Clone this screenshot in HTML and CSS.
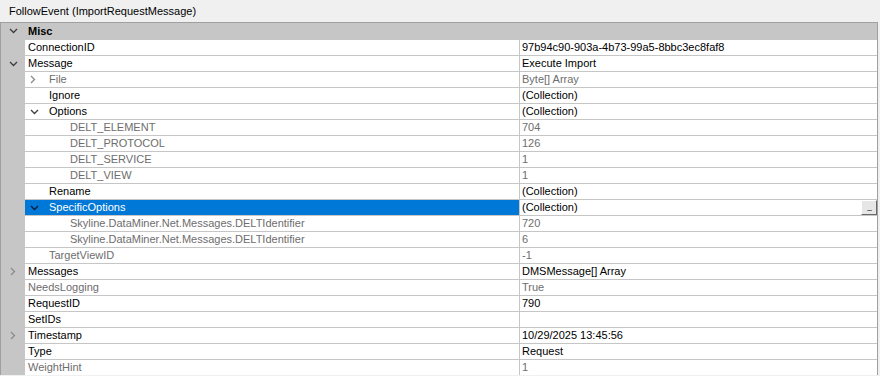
FILE: index.html
```html
<!DOCTYPE html>
<html lang="en">
<head>
    <meta charset="UTF-8">
    <title>FollowEvent</title>
    <link rel="stylesheet" href="styles.css">
</head>
<body>
    <!-- 标题 -->
    <div class="title">FollowEvent (ImportRequestMessage)</div>

    <div class="grid">
        <div class="row cat">
            <div class="gut"><svg class="chev open" width="9" height="6" viewBox="0 0 9 6"><path d="M1 1 L4.5 4.5 L8 1"/></svg></div>
            <div class="name">Misc</div>
        </div>
        <div class="row">
            <div class="gut"></div>
            <div class="name">ConnectionID</div>
            <div class="val">97b94c90-903a-4b73-99a5-8bbc3ec8faf8</div>
        </div>
        <div class="row">
            <div class="gut"><svg class="chev open" width="9" height="6" viewBox="0 0 9 6"><path d="M1 1 L4.5 4.5 L8 1"/></svg></div>
            <div class="name">Message</div>
            <div class="val">Execute Import</div>
        </div>
        <div class="row ro">
            <div class="gut"></div>
            <div class="name lv1"><span class="tw"><svg class="chev" width="6" height="9" viewBox="0 0 6 9"><path d="M1 1 L4.5 4.5 L1 8"/></svg></span>File</div>
            <div class="val">Byte[] Array</div>
        </div>
        <div class="row">
            <div class="gut"></div>
            <div class="name lv1"><span class="tw"></span>Ignore</div>
            <div class="val">(Collection)</div>
        </div>
        <div class="row">
            <div class="gut"></div>
            <div class="name lv1"><span class="tw"><svg class="chev open" width="9" height="6" viewBox="0 0 9 6"><path d="M1 1 L4.5 4.5 L8 1"/></svg></span>Options</div>
            <div class="val">(Collection)</div>
        </div>
        <div class="row ro">
            <div class="gut"></div>
            <div class="name lv2">DELT_ELEMENT</div>
            <div class="val">704</div>
        </div>
        <div class="row ro">
            <div class="gut"></div>
            <div class="name lv2">DELT_PROTOCOL</div>
            <div class="val">126</div>
        </div>
        <div class="row ro">
            <div class="gut"></div>
            <div class="name lv2">DELT_SERVICE</div>
            <div class="val">1</div>
        </div>
        <div class="row ro">
            <div class="gut"></div>
            <div class="name lv2">DELT_VIEW</div>
            <div class="val">1</div>
        </div>
        <div class="row">
            <div class="gut"></div>
            <div class="name lv1"><span class="tw"></span>Rename</div>
            <div class="val">(Collection)</div>
        </div>
        <div class="row sel">
            <div class="gut"></div>
            <div class="name lv1"><span class="tw"><svg class="chev open" width="9" height="6" viewBox="0 0 9 6"><path d="M1 1 L4.5 4.5 L8 1"/></svg></span>SpecificOptions</div>
            <div class="val">(Collection)<span class="dots">...</span></div>
        </div>
        <div class="row ro">
            <div class="gut"></div>
            <div class="name lv2">Skyline.DataMiner.Net.Messages.DELTIdentifier</div>
            <div class="val">720</div>
        </div>
        <div class="row ro">
            <div class="gut"></div>
            <div class="name lv2">Skyline.DataMiner.Net.Messages.DELTIdentifier</div>
            <div class="val">6</div>
        </div>
        <div class="row ro">
            <div class="gut"></div>
            <div class="name lv1"><span class="tw"></span>TargetViewID</div>
            <div class="val">-1</div>
        </div>
        <div class="row">
            <div class="gut"><svg class="chev" width="6" height="9" viewBox="0 0 6 9"><path d="M1 1 L4.5 4.5 L1 8"/></svg></div>
            <div class="name">Messages</div>
            <div class="val">DMSMessage[] Array</div>
        </div>
        <div class="row ro">
            <div class="gut"></div>
            <div class="name">NeedsLogging</div>
            <div class="val">True</div>
        </div>
        <div class="row">
            <div class="gut"></div>
            <div class="name">RequestID</div>
            <div class="val">790</div>
        </div>
        <div class="row">
            <div class="gut"></div>
            <div class="name">SetIDs</div>
            <div class="val"></div>
        </div>
        <div class="row">
            <div class="gut"><svg class="chev" width="6" height="9" viewBox="0 0 6 9"><path d="M1 1 L4.5 4.5 L1 8"/></svg></div>
            <div class="name">Timestamp</div>
            <div class="val">10/29/2025 13:45:56</div>
        </div>
        <div class="row">
            <div class="gut"></div>
            <div class="name">Type</div>
            <div class="val">Request</div>
        </div>
        <div class="row ro">
            <div class="gut"></div>
            <div class="name">WeightHint</div>
            <div class="val">1</div>
        </div>
    </div>
</body>
</html>
```

FILE: styles.css
```css
*{
    margin: 0;
    padding: 0;
    box-sizing: border-box;
}

body{
    background-color: #f0f0f0;
    font-family: "Liberation Sans", Arial, sans-serif;
    font-size: 11px;
    color: #000;
}

.title{
    height: 22px;
    line-height: 22px;
    padding-left: 9px;
}

/* 表格外框 */
.grid{
    width: 878px;
    border: 1px solid #a0a0a0;
    border-bottom: none;
    background-color: #c6c6c6;
}

.row{
    display: flex;
    height: 16px;
    border-top: 1px solid #c6c6c6;
    line-height: 15px;
}

.row:first-child{
    border-top: none;
}

.gut{
    width: 24px;
    flex: none;
    display: flex;
    align-items: center;
    justify-content: center;
}

.name{
    width: 494px;
    flex: none;
    padding-left: 3px;
    background-color: #fff;
    white-space: nowrap;
    overflow: hidden;
    display: flex;
    align-items: center;
}

.name.lv1{
    padding-left: 0;
}

.name.lv2{
    padding-left: 45px;
}

.tw{
    width: 24px;
    flex: none;
    display: flex;
    align-items: center;
    padding-left: 5px;
}

.val{
    flex: 1;
    margin-left: 1px;
    padding-left: 2px;
    background-color: #fff;
    white-space: nowrap;
    position: relative;
}

/* 分类行 */
.row.cat .name{
    background-color: transparent;
    font-weight: bold;
}

.ro .name,
.ro .val{
    color: #6d6d6d;
}

.sel .name{
    background-color: #0078d7;
    color: #fff;
}

.chev{
    display: block;
    fill: none;
    stroke: #8a8a8a;
    stroke-width: 1.3;
}

.chev.open{
    stroke: #3c3c3c;
}

.sel .chev{
    stroke: #0a1a33;
}

/* 省略号按钮 */
.dots{
    position: absolute;
    right: 0;
    top: 0;
    width: 16px;
    height: 15px;
    background-color: #e6e6e6;
    border: 1px solid;
    border-color: #fff #696969 #696969 #fff;
    font-size: 9px;
    line-height: 15px;
    text-align: center;
    letter-spacing: -1px;
}
```
